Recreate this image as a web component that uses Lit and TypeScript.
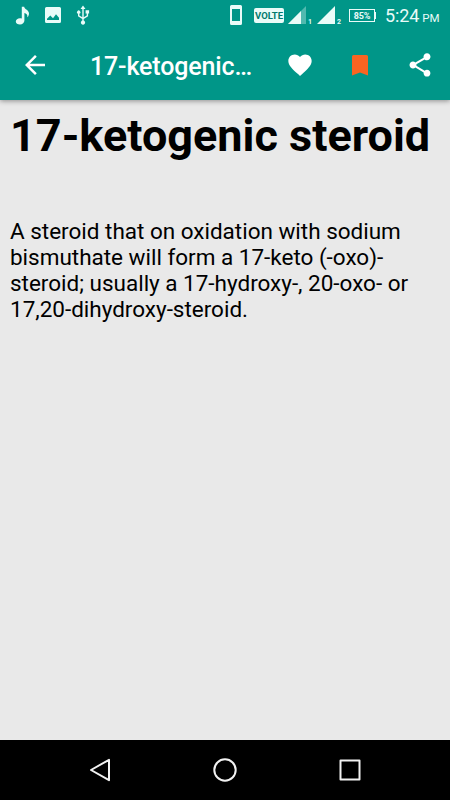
import { LitElement, html, css } from "lit";
import { customElement } from "lit/decorators.js";

@customElement("status-bar")
class StatusBar extends LitElement {
  static styles = css`
    :host { display: flex; height: 30px; align-items: center; color: #e9fbf8; }
    svg { display: block; fill: currentColor; flex: none; }
    .music { margin-left: 15px; }
    .image { margin-left: 14px; }
    .usb { margin-left: 14px; }
    .phone { margin-left: auto; }
    .volte {
      margin-left: 12px; width: 30px; height: 15px; border-radius: 2px; background: #e9fbf8; flex: none;
      color: #00796d; font-size: 9.5px; font-weight: 700; line-height: 15.5px; text-align: center;
    }
    .sig1 { margin-left: 4px; }
    .sim { width: 4px; font-size: 7px; font-weight: 700; line-height: 6px; margin: 13px 0 0 2px; flex: none; }
    .sig2 { margin-left: 5px; }
    .battery {
      box-sizing: border-box; margin-left: 8px; width: 26px; height: 13px; border: 1px solid currentColor; flex: none;
      font-size: 9px; font-weight: 700; line-height: 12px; text-align: center; letter-spacing: -0.2px;
    }
    .nub { width: 1px; height: 7px; background: currentColor; flex: none; }
    .time {
      display: flex; align-items: baseline; gap: 3px; margin: 3px 10px 0 9px; width: 55px;
      white-space: nowrap; font-size: 18px; line-height: 22px; flex: none; letter-spacing: -0.1px;
    }
    .pm { font-size: 11.5px; }
  `;
  render() {
    return html`
      <svg class="music" width="15" height="19" viewBox="0 0 15 19">
        <path d="M6.800 .8h2.400c.2 2.700 5 3.300 4.800 6.900-.1 1.600-.8 2.700-1.600 3.600.3-2.900-1.200-3.800-3-4.300v7.500c0 2.400-1.900 3.900-4.400 3.900C2.600 18.400 .8 17.300 .8 15.400c0-2.300 3-3.900 6-2.900z" />
      </svg>
      <svg class="image" width="18" height="18" viewBox="0 0 18 18">
        <path fill-rule="evenodd" d="M2.500 1h13Q17 1 17 2.500v13q0 1.500-1.500 1.500h-13Q1 17 1 15.500v-13Q1 1 2.500 1zM3 14h12v-2.300l-3-3.500-3 4-2.700-2.700L3 12.700z" />
      </svg>
      <svg class="usb" width="14" height="20" viewBox="0 0 14 20">
        <path d="M7 .5L9.500 4H7.700v8.200l3-1.600V8.500H9.600v-3.200h3.500v3.200h-1v2.800L7.700 14v1.600a2.100 2.100 0 1 1-1.400 0V14L2 11.200V8.800A1.700 1.700 0 1 1 3.400 8.800v1.700l2.900 1.700V4H4.500z" />
      </svg>
      <svg class="phone" width="12" height="20" viewBox="0 0 12 20">
        <path fill-rule="evenodd" d="M1.500 0h9Q12 0 12 1.500v17q0 1.500-1.500 1.500h-9Q0 20 0 18.500v-17Q0 0 1.500 0zM2 4v12h8V4z" />
      </svg>
      <div class="volte">VOLTE</div>
      <svg class="sig1" width="18" height="18" viewBox="0 0 18 18">
        <path opacity=".35" d="M18 0v18H0z" /><path d="M13 5v13H0z" />
      </svg>
      <span class="sim">1</span>
      <svg class="sig2" width="18" height="18" viewBox="0 0 18 18"><path d="M18 0v18H0z" /></svg>
      <span class="sim">2</span>
      <div class="battery">85%</div><i class="nub"></i>
      <div class="time"><span>5:24</span><span class="pm">PM</span></div>
    `;
  }
}

@customElement("app-bar")
class AppBar extends LitElement {
  static styles = css`
    :host { display: flex; height: 70px; align-items: center; color: #fff; }
    svg { display: block; fill: currentColor; }
    .back { width: 30px; height: 30px; margin-left: 20px; }
    .title { margin: 3px 0 0 40px; flex: 1; white-space: nowrap; font-size: 25px; font-weight: 500; line-height: 30px; letter-spacing: -0.15px; }
    .action { width: 60px; display: flex; justify-content: center; }
    .saved { color: #f86422; }
  `;
  render() {
    return html`
      <svg class="back" viewBox="0 0 24 24"><path d="M20 11H7.830l5.590-5.590L12 4l-8 8 8 8 1.410-1.410L7.830 13H20v-2z" /></svg>
      <div class="title">17-ketogenic…</div>
      <div class="action">
        <svg width="28" height="28" viewBox="0 0 24 24"><path d="M12 21.350l-1.450-1.320C5.400 15.360 2 12.280 2 8.500 2 5.420 4.420 3 7.500 3c1.740 0 3.410.81 4.500 2.090C13.090 3.810 14.760 3 16.500 3 19.580 3 22 5.420 22 8.500c0 3.780-3.400 6.860-8.550 11.540L12 21.350z" /></svg>
      </div>
      <div class="action saved">
        <svg width="16" height="21" viewBox="0 0 16 21"><path d="M1.500 0h13Q16 0 16 1.500V20.500L8 17.500 0 20.500V1.500Q0 0 1.500 0z" /></svg>
      </div>
      <div class="action">
        <svg width="28" height="28" viewBox="0 0 24 24"><path d="M18 16.080c-.76 0-1.440.3-1.960.77L8.910 12.700c.05-.23.09-.46.09-.7s-.04-.47-.09-.7l7.050-4.110c.54.5 1.250.81 2.040.81 1.660 0 3-1.340 3-3s-1.340-3-3-3-3 1.340-3 3c0 .24.040.47.090.7L8.040 9.810C7.500 9.310 6.790 9 6 9c-1.660 0-3 1.340-3 3s1.340 3 3 3c.79 0 1.500-.31 2.040-.81l7.120 4.160c-.05.21-.08.43-.08.65 0 1.610 1.310 2.920 2.920 2.920s2.920-1.310 2.920-2.920-1.310-2.920-2.920-2.920z" /></svg>
      </div>
    `;
  }
}

@customElement("nav-bar")
class NavBar extends LitElement {
  static styles = css`
    :host { display: flex; height: 60px; align-items: center; justify-content: center; gap: 95px; background: #000; }
    svg { display: block; fill: none; stroke: #f2f2f2; stroke-width: 2; stroke-linejoin: round; }
  `;
  render() {
    return html`
      <svg width="30" height="30" viewBox="0 0 30 30"><path d="M6 15L24 4.800v20.400z" /></svg>
      <svg width="30" height="30" viewBox="0 0 30 30"><circle cx="15" cy="15" r="10.700" /></svg>
      <svg width="30" height="30" viewBox="0 0 30 30"><rect x="5.500" y="5.500" width="19" height="19" /></svg>
    `;
  }
}

@customElement("app-root")
class AppRoot extends LitElement {
  static styles = css`
    :host { display: flex; flex-direction: column; height: 800px; background: #e9e9e9; font-family: Roboto, sans-serif; }
    .header { background: #009688; box-shadow: 0 1px 5px rgba(0, 0, 0, 0.4); }
    .content { flex: 1; padding: 0 10px; color: #000; }
    h1 { margin: 9px 0 0; font-size: 45px; line-height: 53px; font-weight: 700; white-space: nowrap; }
    p { margin: 56px 0 0; font-size: 22.5px; line-height: 26.150px; letter-spacing: -0.01px; white-space: nowrap; }
  `;
  render() {
    return html`
      <div class="header"><status-bar></status-bar><app-bar></app-bar></div>
      <main class="content">
        <h1>17-ketogenic steroid</h1>
        <p>A steroid that on oxidation with sodium<br />bismuthate will form a 17-keto (-oxo)-<br />steroid; usually a 17-hydroxy-, 20-oxo- or<br />17,20-dihydroxy-steroid.</p>
      </main>
      <nav-bar></nav-bar>
    `;
  }
}
